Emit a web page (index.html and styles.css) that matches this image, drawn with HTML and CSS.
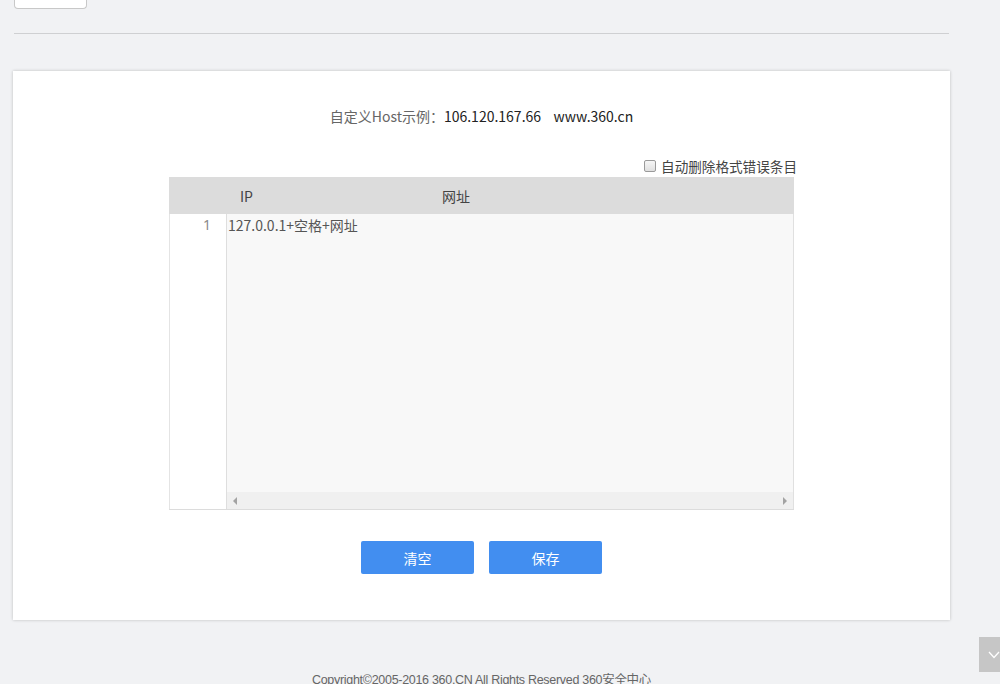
FILE: index.html
```html
<!DOCTYPE html>
<html lang="zh-CN">
<head>
<meta charset="utf-8">
<title>自定义Host</title>
<link rel="stylesheet" href="styles.css">
</head>
<body>
<div class="page">
  <div class="top-btn"></div>
  <div class="divider"></div>
  <div class="card">
    <p class="example"><span class="label">自定义Host示例：</span><span class="value">106.120.167.66&nbsp;&nbsp;&nbsp;&nbsp;www.360.cn</span></p>
    <div class="editor-wrap">
      <label class="auto-del"><span class="box"></span>自动删除格式错误条目</label>
      <div class="editor">
        <div class="editor-head">
          <span class="col-ip">IP</span>
          <span class="col-url">网址</span>
        </div>
        <div class="editor-body">
          <div class="gutter"><div class="ln">1</div></div>
          <div class="content">
            <div class="lines"><div class="line">127.0.0.1+空格+网址</div></div>
            <div class="hscroll"><span class="arr-l"></span><span class="arr-r"></span></div>
          </div>
        </div>
      </div>
    </div>
    <div class="actions">
      <button class="btn">清空</button>
      <button class="btn">保存</button>
    </div>
  </div>
  <p class="copyright">Copyright©2005-2016 360.CN All Rights Reserved 360安全中心</p>
</div>
<a class="to-bottom"><svg width="12" height="8" viewBox="0 0 12 8"><path d="M1 1 L6 6.5 L11 1" fill="none" stroke="#fff" stroke-width="1.3"/></svg></a>
</body>
</html>
```

FILE: styles.css
```css
html, body {
  margin: 0;
  padding: 0;
}
body {
  background: #f1f2f4;
  font-family: "Noto Sans", "Noto Sans CJK SC", sans-serif;
  color: #333;
  overflow: hidden;
  height: 684px;
}
.page {
  padding: 0 50px 0 13px;
}
.top-btn {
  margin-left: 1px;
  width: 71px;
  height: 8px;
  background: #fff;
  border: 1px solid #c8c8c8;
  border-top: none;
  border-radius: 0 0 4px 4px;
}
.divider {
  margin: 24px 1px 0 1px;
  height: 0;
  border-top: 1px solid #cfd0d2;
}
.card {
  margin-top: 37px;
  background: #fff;
  box-shadow: 0 0 3px rgba(0, 0, 0, 0.22);
  height: 549px;
  box-sizing: border-box;
  padding-top: 35px;
  display: flex;
  flex-direction: column;
  align-items: center;
}
.example {
  margin: 0;
  font-size: 14px;
  line-height: 20px;
  font-family: "Noto Sans CJK SC", sans-serif;
}
.example .label {
  color: #666;
}
.example .value {
  color: #222;
}
.editor-wrap {
  width: 625px;
  margin-top: 31px;
  display: flex;
  flex-direction: column;
  align-items: flex-end;
}
.auto-del {
  display: flex;
  align-items: center;
  font-family: "Noto Sans CJK SC", sans-serif;
  font-size: 13.6px;
  line-height: 18px;
  color: #444;
  margin-right: -3px;
}
.auto-del .box {
  width: 10px;
  height: 10px;
  border: 1px solid #9a9a9a;
  border-radius: 2px;
  background: linear-gradient(#f6f6f6, #e0e0e0);
  margin-right: 5px;
}
.editor {
  width: 625px;
  margin-top: 2px;
  border-bottom: 1px solid #dcdcdc;
}
.editor-head {
  height: 37px;
  background: #dcdcdc;
  display: flex;
  align-items: center;
  font-size: 14px;
  color: #444;
  font-family: "Noto Sans CJK SC", sans-serif;
}
.col-ip {
  margin-left: 71px;
  width: 202px;
}
.editor-body {
  display: flex;
  height: 295px;
}
.gutter {
  width: 58px;
  background: #fff;
  border-left: 1px solid #e4e4e4;
  border-right: 1px solid #dedede;
  box-sizing: border-box;
}
.ln {
  text-align: right;
  padding-right: 15px;
  font-size: 14px;
  line-height: 22px;
  color: #8a8a8a;
  font-family: "Noto Sans", sans-serif;
}
.content {
  flex: 1;
  display: flex;
  flex-direction: column;
  background: #f8f8f8;
  border-right: 1px solid #e0e0e0;
}
.lines {
  flex: 1;
}
.line {
  padding-left: 1px;
  font-size: 14px;
  line-height: 22px;
  color: #555;
  font-family: "Noto Sans CJK SC", sans-serif;
}
.hscroll {
  height: 17px;
  background: #f0f0f0;
  display: flex;
  align-items: center;
  justify-content: space-between;
  padding: 0 6px;
}
.arr-l, .arr-r {
  width: 0;
  height: 0;
  border-top: 4px solid transparent;
  border-bottom: 4px solid transparent;
}
.arr-l {
  border-right: 4px solid #a3a3a3;
}
.arr-r {
  border-left: 4px solid #a3a3a3;
}
.actions {
  margin-top: 31px;
  display: flex;
  gap: 15px;
}
.btn {
  width: 113px;
  height: 33px;
  border: none;
  border-radius: 2px;
  background: #428ef0;
  color: #fff;
  font-family: "Noto Sans CJK SC", sans-serif;
  font-size: 14px;
  padding: 0;
}
.copyright {
  margin: 52px 0 0 0;
  text-align: center;
  font-family: "Liberation Sans", "Noto Sans CJK SC", sans-serif;
  font-size: 12.5px;
  line-height: 16px;
  color: #666;
  letter-spacing: -0.3px;
}
.to-bottom {
  position: fixed;
  right: 0;
  top: 637px;
  width: 21px;
  height: 35px;
  background: #c6c6c6;
  display: flex;
  align-items: center;
  justify-content: flex-end;
  overflow: hidden;
}
.to-bottom svg {
  margin-right: 0;
}
```
